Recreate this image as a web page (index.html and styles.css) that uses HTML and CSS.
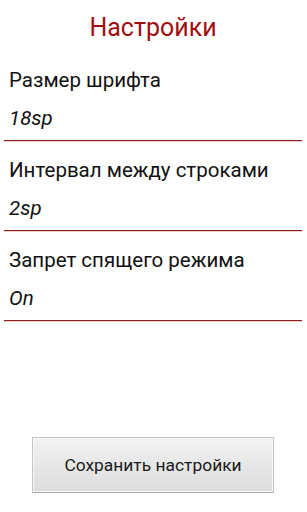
FILE: index.html
```html
<!DOCTYPE html>
<html lang="ru">
  <head>
    <meta charset="UTF-8" />
    <meta name="viewport" content="width=device-width, initial-scale=1.0" />
    <title>Настройки</title>
    <link rel="stylesheet" href="styles.css">
  </head>
  <body>
    <div class="screen">
      <h1 class="title">Настройки</h1>
      <div class="option">
        <div class="label">Размер шрифта</div>
        <div class="value">18sp</div>
      </div>
      <div class="option">
        <div class="label">Интервал между строками</div>
        <div class="value">2sp</div>
      </div>
      <div class="option">
        <div class="label">Запрет спящего режима</div>
        <div class="value">On</div>
      </div>
      <div class="footer">
        <button class="save">Сохранить настройки</button>
      </div>
    </div>
  </body>
</html>
```

FILE: styles.css
```css
* {
  margin: 0;
  padding: 0;
  box-sizing: border-box;
}
body {
  width: 307px;
  height: 512px;
  background: white;
  font-family: Roboto, "Noto Sans", sans-serif;
  color: #111;
}
.screen {
  display: flex;
  flex-direction: column;
  height: 512px;
  padding: 0 5px 0 4px;
}
.title {
  font-weight: normal;
  font-size: 25px;
  color: #a00d0d;
  text-align: center;
  line-height: 30px;
  margin-top: 13px;
  margin-bottom: 25px;
}
.option {
  border-bottom: 1px solid #8b1c1c;
  box-shadow: 0 1px 0 #f0d0d0;
  margin-bottom: 17px;
  padding-left: 5px;
}
.label {
  font-size: 20.5px;
  line-height: 24px;
}
.value {
  font-size: 20.5px;
  font-style: italic;
  line-height: 24px;
  margin-top: 14px;
  padding-bottom: 10px;
}
.footer {
  margin-top: auto;
  display: flex;
  justify-content: center;
  padding-bottom: 19px;
}
.save {
  width: 242px;
  height: 56px;
  font-family: Roboto, "Noto Sans", sans-serif;
  font-size: 17.4px;
  color: #1a1a1a;
  background: linear-gradient(#f2f2f2, #dcdcdc);
  border: 1px solid #c4c4c4;
  border-bottom-color: #a8a8a8;
  border-radius: 1px;
  box-shadow: inset 0 0 0 1px #f8f8f8;
}
```
